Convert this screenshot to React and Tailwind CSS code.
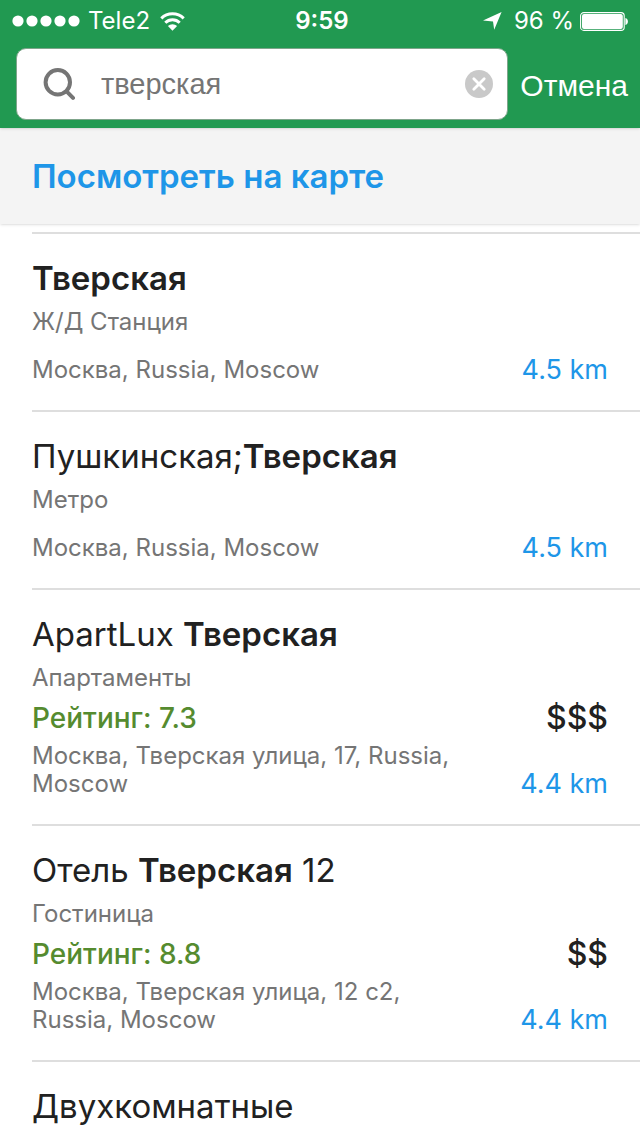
import React, { useState } from "react";

const places = [
  { title: [["Тверская", true]], kind: "Ж/Д Станция", address: "Москва, Russia, Moscow", distance: "4.5 km" },
  { title: [["Пушкинская;", false], ["Тверская", true]], kind: "Метро", address: "Москва, Russia, Moscow", distance: "4.5 km" },
  {
    title: [["ApartLux ", false], ["Тверская", true]],
    kind: "Апартаменты",
    rating: "7.3",
    price: "$$$",
    address: "Москва, Тверская улица, 17, Russia, Moscow",
    distance: "4.4 km",
  },
  {
    title: [["Отель ", false], ["Тверская", true], [" 12", false]],
    kind: "Гостиница",
    rating: "8.8",
    price: "$$",
    address: "Москва, Тверская улица, 12 с2, Russia, Moscow",
    distance: "4.4 km",
  },
  { title: [["Двухкомнатные", false]] },
];

function StatusBar() {
  return (
    <div className="grid h-10 grid-cols-[1fr_auto_1fr] items-center pt-0.5 pr-3 pl-3 text-2xl leading-8">
      <div className="flex items-center gap-2">
        <svg className="h-3 w-[68px]" viewBox="0 0 68 12" fill="currentColor" aria-hidden="true">
          <circle cx="6" cy="6" r="5.6" />
          <circle cx="20" cy="6" r="5.6" />
          <circle cx="34" cy="6" r="5.6" />
          <circle cx="48" cy="6" r="5.6" />
          <circle cx="62" cy="6" r="5.6" />
        </svg>
        <span>Tele2</span>
        <svg className="ml-0.5 h-[19px] w-[25px] shrink-0" viewBox="0 0 25 19" aria-hidden="true">
          <g fill="none" stroke="currentColor" strokeWidth="3">
            <path d="M1.3 6.4a15.8 15.8 0 0 1 22.4 0" />
            <path d="M5.3 10.7a10.2 10.2 0 0 1 14.4 0" />
          </g>
          <path d="M12.5 18.8 7.9 14a6.6 6.6 0 0 1 9.2 0z" fill="currentColor" />
        </svg>
      </div>
      <span className="pl-1 text-center font-semibold">9:59</span>
      <div className="flex items-center justify-end whitespace-nowrap">
        <svg className="mr-3 h-[18px] w-[19px]" viewBox="0 0 19 18" fill="currentColor" aria-hidden="true">
          <path d="M18.6 0 11.2 17.8 10 9.4 0 8.4z" />
        </svg>
        <span>96 %</span>
        <svg className="ml-1.5 h-[19px] w-[48px]" viewBox="0 0 48 19" aria-hidden="true">
          <rect x="0.6" y="0.6" width="43.6" height="17.8" rx="3.2" fill="none" stroke="currentColor" strokeWidth="1.1" />
          <rect x="2" y="2" width="40.8" height="15" rx="2" fill="currentColor" />
          <path d="M45.4 6c3.3.6 3.3 6.4 0 7z" fill="currentColor" />
        </svg>
      </div>
    </div>
  );
}

function SearchBar() {
  const [query, setQuery] = useState("тверская");
  return (
    <div className="flex items-center gap-3 pt-2 pr-3 pb-2 pl-4 font-['Liberation_Sans',sans-serif]">
      <div className="flex h-[72px] min-w-0 flex-1 items-center rounded-[10px] border border-[#7fa58b] bg-white pr-3.5 pl-[26px]">
        <svg className="h-8 w-8 shrink-0" viewBox="0 0 32 32" fill="none" stroke="#757575" strokeWidth="4" strokeLinecap="round" aria-hidden="true">
          <circle cx="14.8" cy="14.2" r="12.2" />
          <path d="M23.6 23.4 30 29.8" />
        </svg>
        <input
          className="ml-[26px] min-w-0 flex-1 bg-transparent text-[29px] leading-9 text-[#757575] outline-none"
          type="text"
          aria-label="Поиск"
          value={query}
          onChange={(e) => setQuery(e.target.value)}
        />
        <button type="button" aria-label="Очистить" onClick={() => setQuery("")}>
          <svg className="block h-7 w-7" viewBox="0 0 28 28" aria-hidden="true">
            <circle cx="14" cy="14" r="14" fill="#c9c9c9" />
            <path d="m8.8 8.8 10.4 10.4m0-10.4L8.8 19.2" stroke="white" strokeWidth="2.8" strokeLinecap="round" />
          </svg>
        </button>
      </div>
      <button type="button" className="pt-1 text-[30px] leading-9 text-white">Отмена</button>
    </div>
  );
}

function Place({ place }) {
  return (
    <li className="border-t-2 border-[#dedede] pt-6 pr-8 pb-[26px]">
      <h2 className="text-[33px] leading-10 text-[#212121]">
        {place.title.map(([text, bold]) => (
          <span key={text} className={bold ? "font-semibold" : ""}>{text}</span>
        ))}
      </h2>
      {place.kind && <p className="mt-2.5 text-2xl leading-7 text-[#757575]">{place.kind}</p>}
      {place.rating && (
        <div className="mt-2.5 flex items-center justify-between leading-8 font-medium">
          <span className="text-[28px] text-[#558b2f]">Рейтинг: {place.rating}</span>
          <span className="text-[32px] text-[#212121]">{place.price}</span>
        </div>
      )}
      {place.address && (
        <div className={place.rating ? "mt-2 flex items-end justify-between" : "mt-5 flex items-end justify-between"}>
          <p className="max-w-[440px] text-2xl leading-7 text-[#757575]">{place.address}</p>
          <span className="text-[27px] leading-7 whitespace-nowrap text-[#1e96e8]">{place.distance}</span>
        </div>
      )}
    </li>
  );
}

export default function App() {
  return (
    <div className="flex h-screen flex-col overflow-hidden bg-white font-['Inter',sans-serif]">
      <header className="z-20 shrink-0 bg-[#219951] text-white shadow-sm">
        <StatusBar />
        <SearchBar />
      </header>
      <div className="z-10 shrink-0 bg-[#f4f4f4] px-8 py-7 shadow-sm">
        <a href="#map" className="block text-[33px] leading-10 font-semibold text-[#1e96e8]">Посмотреть на карте</a>
      </div>
      <ul className="mt-2 ml-8 min-h-0 flex-1 overflow-hidden">
        {places.map((place, i) => (
          <Place key={i} place={place} />
        ))}
      </ul>
    </div>
  );
}
